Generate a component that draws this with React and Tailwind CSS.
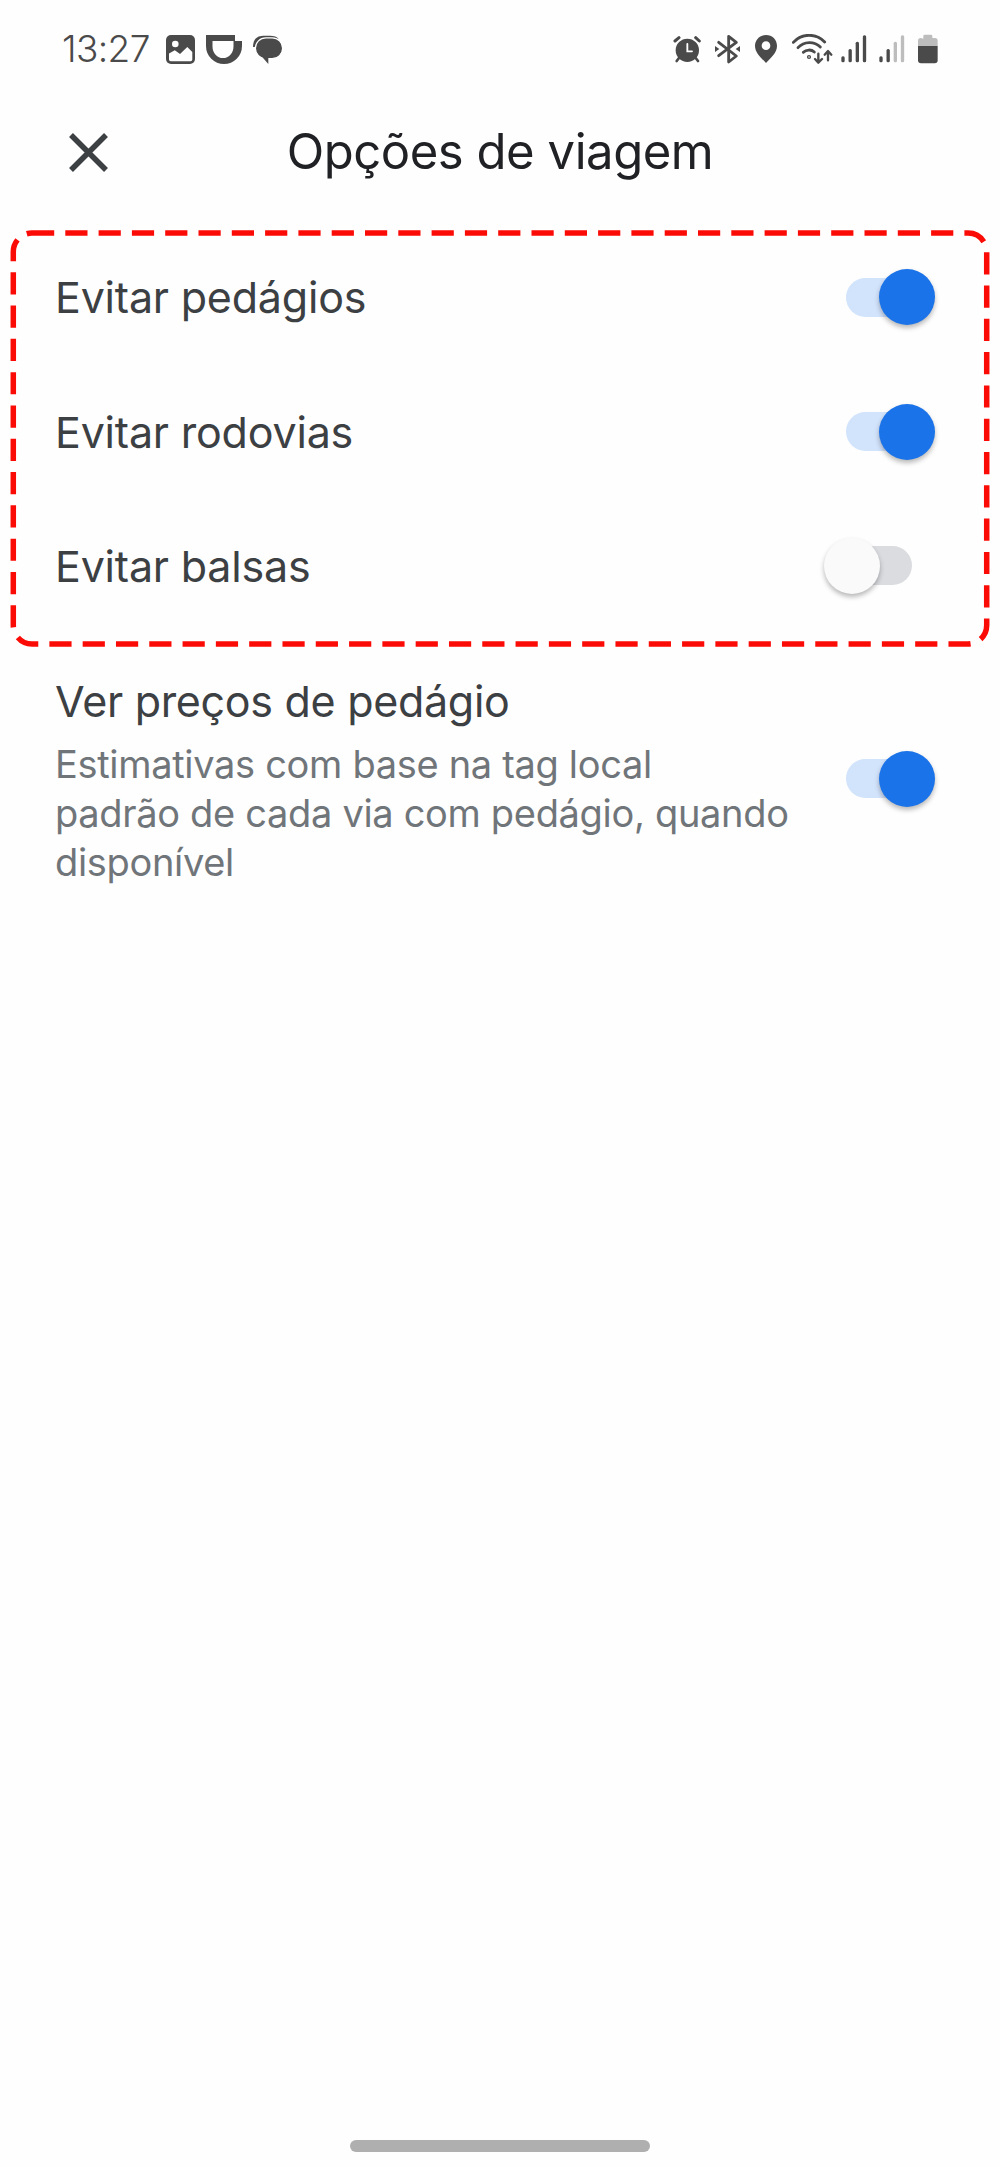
import React, { useState } from 'react';

const INK = '#4a4a4a';
const FADED = '#bdbdbd';

const PictureIcon = () => (
  <svg width="29" height="29" viewBox="0 0 29 29">
    <rect width="29" height="29" rx="5" fill={INK} />
    <circle cx="9.3" cy="9" r="3.3" fill="#fff" />
    <path d="M3 18.5 L8.8 15.2 L14 19 L21.3 12 L26.3 17 V24.5 Q26.3 26.3 24.5 26.3 H4.8 Q3 26.3 3 24.5 Z" fill="#fff" />
  </svg>
);

const RideIcon = () => (
  <svg width="36" height="29" viewBox="0 0 36 29">
    <path fill={INK} fillRule="evenodd" d="M0 0 H29 V6 H36 V11 A18 18 0 0 1 0 11 Z M6.5 6 V11.5 A10.2 11.2 0 0 0 27.5 11.5 V6 Z" />
  </svg>
);

const ChatIcon = () => (
  <svg width="30" height="29" viewBox="0 0 30 29">
    <path d="M0 12 C0 4 4 1 10 0.7 H17 C21 0.7 24 1.5 25.5 4 L20 12 Z" fill={INK} />
    <rect x="2.4" y="2.9" width="27.2" height="20.8" rx="10.4" fill={INK} stroke="#fff" strokeWidth="1.2" />
    <path d="M7.5 20 L15.3 29 V21 Z" fill={INK} />
  </svg>
);

const AlarmIcon = () => (
  <svg width="28" height="30" viewBox="0 0 84 90" fill="none" strokeLinecap="round">
    <circle cx="43" cy="49" r="35" fill={INK} />
    <path d="M6 21 L18 11 M68 11 L79 21" stroke={INK} strokeWidth="9" />
    <path d="M18 72 L11 81 M68 72 L75 81" stroke={INK} strokeWidth="8" />
    <path d="M43 30 V52 H57" stroke="#fff" strokeWidth="5.5" />
  </svg>
);

const BluetoothIcon = () => (
  <svg width="25" height="30" viewBox="0 0 75 90" fill="none">
    <path d="M11 25 L64 66 L41 84 V7 L64 25 L11 65" stroke={INK} strokeWidth="8.5" strokeLinecap="round" strokeLinejoin="round" />
    <path d="M0 36 L13 45 L0 54 Z M75 36 L62 45 L75 54 Z" fill={INK} />
  </svg>
);

const PinIcon = () => (
  <svg width="22" height="30" viewBox="0 0 66 90">
    <path fill={INK} fillRule="evenodd" d="M33 3 C14 3 0 17 0 36 C0 56 18 71 33 87 C48 71 66 56 66 36 C66 17 52 3 33 3 Z M33 22 A13 13 0 1 0 33 48 A13 13 0 1 0 33 22 Z" />
  </svg>
);

const WifiIcon = () => (
  <svg width="41" height="30" viewBox="0 0 123 90" fill="none" stroke={INK} strokeWidth="8.5" strokeLinecap="round" strokeLinejoin="round">
    <path d="M4 25 C29 -3 73 -3 98 24" />
    <path d="M18 41 C36 21 67 21 85 39" />
    <path d="M34 55 C43 46 58 46 67 54" />
    <circle cx="51" cy="69" r="2" />
    <path d="M79 59 V85 M69 75 L79 86 L90 75" strokeWidth="7" />
    <path d="M108 79 V52 M98 62 L108 51 L118 62" strokeWidth="7" />
  </svg>
);

// level = how many of the four bars are lit
const SignalIcon = ({ level }) => (
  <svg width="26" height="30" viewBox="0 0 78 90">
    {[67, 45, 23, 4].map((top, i) => (
      <rect key={top} x={1 + i * 21.5} y={top} width="10" height={85 - top} rx="4.5" fill={i < level ? INK : FADED} />
    ))}
  </svg>
);

const BatteryIcon = () => (
  <svg width="20" height="30" viewBox="0 0 60 90">
    <path d="M16 14 V6 Q16 2 20 2 H39 Q43 2 43 6 V12 H51 Q59 12 59 20 V37 H0 V20 Q0 12 8 12 Z" fill={FADED} />
    <path d="M0 36 H59 V79 Q59 88 50 88 H9 Q0 88 0 79 Z" fill={INK} />
  </svg>
);

function Toggle({ on, onClick }) {
  return (
    <button
      role="switch"
      aria-checked={on}
      onClick={onClick}
      className={`relative mr-[88px] h-[39px] w-[66px] shrink-0 rounded-full ${on ? 'bg-[#d2e3fc]' : 'bg-[#dadce0]'}`}
    >
      <span
        className={`absolute top-[-8.5px] h-14 w-14 rounded-full shadow-[0_3px_5px_rgba(0,0,0,0.28)] ${
          on ? 'left-[32.5px] bg-[#1a73e8]' : 'left-[-22px] bg-[#fafafa]'
        }`}
      />
    </button>
  );
}

const avoidOptions = [
  { key: 'tolls', label: 'Evitar pedágios' },
  { key: 'highways', label: 'Evitar rodovias' },
  { key: 'ferries', label: 'Evitar balsas' },
];

export default function App() {
  const [options, setOptions] = useState({ tolls: true, highways: true, ferries: false, prices: true });
  const flip = (key) => setOptions({ ...options, [key]: !options[key] });

  return (
    <div className="flex h-[2167px] w-[1000px] flex-col bg-[#fefefe] font-['Inter',sans-serif] text-[#3c4043]">
      {/* STATUS BAR */}
      <div className="flex h-[98px] shrink-0 items-center justify-between pr-[62px] pl-[62px]">
        <div className="flex items-center">
          <span className="w-[104px] text-[37px] font-light tracking-[-0.6px] text-[#4a4a4a]">13:27</span>
          <div className="flex items-center gap-[11px]">
            <PictureIcon />
            <RideIcon />
            <ChatIcon />
          </div>
        </div>
        <div className="flex items-center">
          <AlarmIcon />
          <div className="ml-3.5"><BluetoothIcon /></div>
          <div className="ml-[15px]"><PinIcon /></div>
          <div className="ml-[15px]"><WifiIcon /></div>
          <div className="ml-2"><SignalIcon level={4} /></div>
          <div className="ml-3"><SignalIcon level={2} /></div>
          <div className="ml-[13px]"><BatteryIcon /></div>
        </div>
      </div>

      {/* HEADER */}
      <header className="grid h-[132px] shrink-0 grid-cols-[88px_1fr_88px] items-start pt-[24px]">
        <button aria-label="Fechar" className="ml-[69px] mt-[11px] w-[39px]">
          <svg width="39" height="39" viewBox="0 0 39 39" stroke="#3c4043" strokeWidth="5.5">
            <path d="M2 2 L37 37 M37 2 L2 37" />
          </svg>
        </button>
        <h1 className="text-center text-[49px] leading-[60px] tracking-[-0.45px] whitespace-nowrap text-[#202124]">Opções de viagem</h1>
      </header>

      {/* AVOID OPTIONS */}
      <section className="relative h-[403px] shrink-0">
        {avoidOptions.map(({ key, label }) => (
          <div key={key} className="flex h-[134.4px] items-center justify-between pl-[55px]">
            <span className="text-[43px] leading-[52px] tracking-[-0.2px]">{label}</span>
            <Toggle on={options[key]} onClick={() => flip(key)} />
          </div>
        ))}
        {/* dashed highlight around the group */}
        <svg className="pointer-events-none absolute top-0 left-0" width="1000" height="420" fill="none">
          <rect x="13.3" y="3" width="973.4" height="411" rx="18.7" stroke="#fb0b06" strokeWidth="5.5" strokeDasharray="22.2 11.1" />
        </svg>
      </section>

      {/* TOLL PRICES */}
      <section className="flex h-[291px] shrink-0 items-center justify-between pl-[55px]">
        <div className="pt-1">
          <h2 className="text-[43px] leading-[52px] tracking-[-0.3px]">Ver preços de pedágio</h2>
          <p className="mt-[13px] text-[38px] leading-[49px] tracking-[-0.32px] whitespace-nowrap text-[#70757a]">
            Estimativas com base na tag local
            <br />
            padrão de cada via com pedágio, quando
            <br />
            disponível
          </p>
        </div>
        <Toggle on={options.prices} onClick={() => flip('prices')} />
      </section>

      {/* HOME INDICATOR */}
      <div className="mt-auto mb-[15px] h-3 w-[300px] self-center rounded-full bg-[#afafaf]" />
    </div>
  );
}
